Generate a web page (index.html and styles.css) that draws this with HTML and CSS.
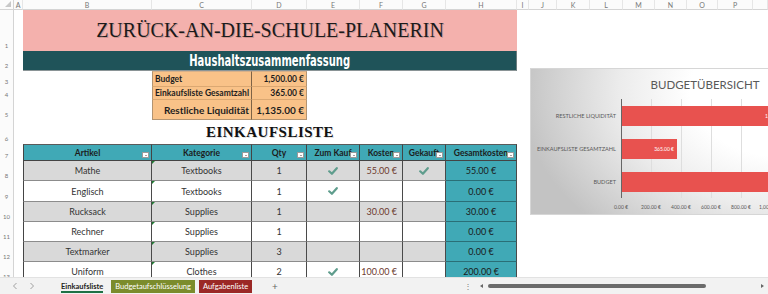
FILE: index.html
```html
<!DOCTYPE html>
<html lang="de">
<head>
  <meta charset="UTF-8">
  <title>Zurück-an-die-Schule-Planerin</title>
  <meta name="viewport" content="width=device-width, initial-scale=1.0">
  <link rel="stylesheet" href="styles.css">
</head>
<body>

<div class="sheet">

  <div class="row row-head">
    <div class="corner"></div>
    <div class="col">A</div>
    <div class="col">B</div>
    <div class="col">C</div>
    <div class="col">D</div>
    <div class="col">E</div>
    <div class="col">F</div>
    <div class="col">G</div>
    <div class="col">H</div>
    <div class="col">I</div>
    <div class="col">J</div>
    <div class="col">K</div>
    <div class="col">L</div>
    <div class="col">M</div>
    <div class="col">N</div>
    <div class="col">O</div>
    <div class="col">P</div>
    <div class="col"></div>
  </div>

  <div class="row r1">
    <div class="num">1</div>
    <div class="title">Zurück-an-die-Schule-Planerin</div>
  </div>

  <div class="row r2">
    <div class="num">2</div>
    <div class="subtitle"><span>Haushaltszusammenfassung</span></div>
  </div>

  <div class="row r3">
    <div class="num">3</div>
    <div class="sum-label left top">Budget</div>
    <div class="sum-value top">1,500.00 €</div>
  </div>

  <div class="row r4">
    <div class="num">4</div>
    <div class="sum-label">Einkaufsliste Gesamtzahl</div>
    <div class="sum-value">365.00 €</div>
  </div>

  <div class="row r5">
    <div class="num">5</div>
    <div class="sum-label big bottom">Restliche Liquidität</div>
    <div class="sum-value big bottom">1,135.00 €</div>
  </div>

  <div class="row r6">
    <div class="num">6</div>
    <div class="heading">Einkaufsliste</div>
  </div>

  <div class="row r7">
    <div class="num">7</div>
    <div class="th first">Artikel<span class="filter"></span></div>
    <div class="th">Kategorie<span class="filter"></span></div>
    <div class="th">Qty<span class="filter"></span></div>
    <div class="th">Zum Kauf<span class="filter"></span></div>
    <div class="th">Kosten<span class="filter"></span></div>
    <div class="th">Gekauft<span class="filter"></span></div>
    <div class="th">Gesamtkosten<span class="filter"></span></div>
  </div>

  <div class="row r-data gray">
    <div class="num">8</div>
    <div class="td first">Mathe</div>
    <div class="td cat">Textbooks</div>
    <div class="td">1</div>
    <div class="td"><svg class="check" viewBox="0 0 10 8"><path d="M1.2 4.3 3.9 6.8 8.8 1.2"/></svg></div>
    <div class="td cost">55.00 €</div>
    <div class="td"><svg class="check" viewBox="0 0 10 8"><path d="M1.2 4.3 3.9 6.8 8.8 1.2"/></svg></div>
    <div class="td total">55.00 €</div>
  </div>

  <div class="row r-data r9">
    <div class="num">9</div>
    <div class="td first">Englisch</div>
    <div class="td cat">Textbooks</div>
    <div class="td">1</div>
    <div class="td"><svg class="check" viewBox="0 0 10 8"><path d="M1.2 4.3 3.9 6.8 8.8 1.2"/></svg></div>
    <div class="td cost"></div>
    <div class="td"></div>
    <div class="td total">0.00 €</div>
  </div>

  <div class="row r-data gray">
    <div class="num">10</div>
    <div class="td first">Rucksack</div>
    <div class="td cat">Supplies</div>
    <div class="td">1</div>
    <div class="td"></div>
    <div class="td cost">30.00 €</div>
    <div class="td"></div>
    <div class="td total">30.00 €</div>
  </div>

  <div class="row r-data">
    <div class="num">11</div>
    <div class="td first">Rechner</div>
    <div class="td cat">Supplies</div>
    <div class="td">1</div>
    <div class="td"></div>
    <div class="td cost"></div>
    <div class="td"></div>
    <div class="td total">0.00 €</div>
  </div>

  <div class="row r-data gray">
    <div class="num">12</div>
    <div class="td first">Textmarker</div>
    <div class="td cat">Supplies</div>
    <div class="td">3</div>
    <div class="td"></div>
    <div class="td cost"></div>
    <div class="td"></div>
    <div class="td total">0.00 €</div>
  </div>

  <div class="row r-data">
    <div class="num">13</div>
    <div class="td first">Uniform</div>
    <div class="td cat">Clothes</div>
    <div class="td">2</div>
    <div class="td"><svg class="check" viewBox="0 0 10 8"><path d="M1.2 4.3 3.9 6.8 8.8 1.2"/></svg></div>
    <div class="td cost">100.00 €</div>
    <div class="td"></div>
    <div class="td total">200.00 €</div>
  </div>

  <!-- floating chart object -->
  <div class="chart">
    <div class="chart-title">Budgetübersicht</div>
    <div class="chart-labels">
      <div>Restliche Liquidität</div>
      <div>Einkaufsliste Gesamtzahl</div>
      <div>Budget</div>
    </div>
    <div class="plot">
      <div class="bar" style="width:170px"><span>1,135.00 €</span></div>
      <div class="bar" style="width:55px"><span>365.00 €</span></div>
      <div class="bar" style="width:225px"><span>1,500.00 €</span></div>
    </div>
    <div></div>
    <div class="ticks">
      <span>0.00 €</span>
      <span>200.00 €</span>
      <span>400.00 €</span>
      <span>600.00 €</span>
      <span>800.00 €</span>
      <span>1,000.00 €</span>
      <span>1,200.00 €</span>
      <span>1,400.00 €</span>
      <span>1,600.00 €</span>
    </div>
  </div>

</div>

<div class="tabbar">
  <span class="nav first-nav"><svg viewBox="0 0 6 8"><path d="M4.5 1 1.5 4 4.5 7"/></svg></span>
  <span class="nav"><svg viewBox="0 0 6 8"><path d="M1.5 1 4.5 4 1.5 7"/></svg></span>
  <span class="tab active">Einkaufsliste</span>
  <span class="tab olive">Budgetaufschlüsselung</span>
  <span class="tab red">Aufgabenliste</span>
  <span class="add">+</span>
  <div class="hscroll">
    <span class="dots">&#8942;</span>
    <span class="arrow-left"></span>
    <span class="thumb"></span>
    <span class="arrow-right"></span>
  </div>
</div>

</body>
</html>
```

FILE: styles.css
```css
* { box-sizing: border-box; }
body { margin: 0; font-family: Lato, "Open Sans", sans-serif; color: #222; background: #fff; }

.sheet { position: relative; height: 277px; overflow: hidden; }
.row {
  display: grid;
  grid-template-columns: 14px 9px 129px 100px 55px 53px 43px 43px 71px 12px 28px 33px 33px 32px 32px 31px 35px 1fr;
}
.row-head { height: 10px; }
.r1 { height: 41px; }
.r2 { height: 20px; }
.r3 { height: 16px; }
.r4 { height: 13px; }
.r5 { height: 20px; }
.r6 { height: 24px; }
.r7 { height: 17px; }
.r-data { height: 20px; }
.r-data.r9 { height: 21px; }

/* headers */
.corner { position: relative; background: #fbfbfb; border-right: 1px solid #d4d4d4; border-bottom: 1px solid #d4d4d4; }
.corner::after { content: ""; position: absolute; right: 2px; bottom: 2px; border-left: 6px solid transparent; border-bottom: 6px solid #c8c8c8; }
.col {
  display: flex; align-items: center; justify-content: center;
  font-size: 7px; color: #777; background: #fbfbfb;
  border-right: 1px solid #e6e6e6; border-bottom: 1px solid #d4d4d4;
}
.num {
  grid-column: 1;
  display: flex; align-items: flex-end; justify-content: center;
  padding-bottom: 2px; font-size: 6px; line-height: 7px; color: #777;
  background: #fbfbfb; border-right: 1px solid #d4d4d4;
}

/* title block */
.title {
  grid-column: 3 / 10;
  display: flex; align-items: center; justify-content: center;
  background: #f4b1ad;
  font-family: "Liberation Serif", serif; font-size: 20px;
  text-transform: uppercase; color: #1b1b1b;
  text-shadow: 1px 1px 0 rgba(0, 0, 0, .18);
}
.subtitle {
  grid-column: 3 / 10;
  display: flex; align-items: center; justify-content: center;
  background: #1f5359; color: #fff;
  border-right: 1px solid #6c7c7e; border-bottom: 1px solid #8a9496;
}
.subtitle span {
  display: inline-block; transform: scaleX(.74);
  font-family: "DejaVu Sans Condensed", "Liberation Sans", sans-serif;
  font-weight: bold; font-size: 15px; white-space: nowrap;
}

/* summary box */
.sum-label, .sum-value {
  display: flex; align-items: center; justify-content: flex-end;
  background: #f9c288; font-weight: bold; font-size: 8.5px; color: #1e1e1e;
  padding: 0 2px; border-bottom: 1px solid #dba872; white-space: nowrap;
}
.sum-label { grid-column: 4; border-left: 1px solid #b39471; border-right: 1px solid #7e6346; }
.sum-label.left { justify-content: flex-start; }
.sum-value { border-right: 1px solid #b39471; }
.top { border-top: 1px solid #d6b08a; }
.bottom { border-bottom: 1px solid #b39471; }
.big { font-size: 10px; }

.heading {
  grid-column: 3 / 10;
  display: flex; align-items: center; justify-content: center;
  font-family: "Liberation Serif", serif; font-weight: bold; font-size: 15px;
  letter-spacing: .5px; text-transform: uppercase; color: #111;
  text-shadow: 1px 1px 0 rgba(0, 0, 0, .15);
}

/* shopping table */
.th {
  position: relative; overflow: hidden; white-space: nowrap;
  display: flex; align-items: center; justify-content: center;
  background: #40a9b6; font-weight: bold; font-size: 8.5px; color: #1c1c1c;
  border-top: 1px solid #5a5a5a; border-right: 1px solid #444; border-bottom: 1px solid #444;
}
.th.first, .td.first { grid-column: 3; border-left: 1px solid #444; }
.filter {
  position: absolute; right: 2px; bottom: 2px; width: 7px; height: 6px;
  background: #fff; border: 1px solid #9a9a9a;
}
.filter::after {
  content: ""; position: absolute; left: 1.5px; top: 1.5px;
  border-left: 1.5px solid transparent; border-right: 1.5px solid transparent; border-top: 1.5px solid #444;
}

.td {
  position: relative;
  display: flex; align-items: center; justify-content: center;
  font-size: 9px; color: #333; background: #fff;
  border-right: 1px solid #4a4a4a; border-bottom: 1px solid #8c8c8c;
}
.gray .td { background: #d9d9d9; }
.td.cost { justify-content: flex-end; padding-right: 5px; color: #6d3a2f; }
.gray .td.total, .td.total { background: #40a9b6; color: #1a1a1a; border-bottom: 1px solid #2a6f77; }
.td.cat::before {
  content: ""; position: absolute; left: 0; top: 0;
  border-top: 3px solid #1f7a33; border-right: 3px solid transparent;
}
.check { width: 10px; height: 8px; fill: none; stroke: #5f9d8d; stroke-width: 2.2; stroke-linecap: round; stroke-linejoin: round; }

/* chart */
.chart {
  position: absolute; left: 530px; top: 68px; width: 350px; height: 147px;
  display: grid; grid-template-columns: 90px 1fr; grid-template-rows: 30px 99px 18px;
  background: radial-gradient(ellipse 75% 130% at 72% 15%, #fff 35%, #ececec 62%, #c3c3c3 100%);
  border: 1px solid #d6d6d6;
}
.chart-title {
  grid-column: 1 / 3;
  display: flex; align-items: center; justify-content: center;
  font-size: 11.5px; color: #595959; text-transform: uppercase;
}
.chart-labels { display: flex; flex-direction: column; justify-content: space-around; }
.chart-labels div { text-align: right; padding-right: 5px; font-size: 5.6px; color: #595959; text-transform: uppercase; white-space: nowrap; }
.plot {
  display: flex; flex-direction: column; justify-content: space-around;
  border-left: 1px solid #666;
  background: repeating-linear-gradient(to right, transparent 0 29px, #dedede 29px 30px);
}
.bar {
  height: 20px; background: #e8524f;
  display: flex; align-items: center; justify-content: flex-end;
}
.bar span { padding-right: 3px; font-size: 5px; color: #fff; white-space: nowrap; }
.ticks { display: flex; align-items: center; margin-left: -15px; }
.ticks span { flex: none; width: 30px; text-align: center; font-size: 5px; color: #595959; white-space: nowrap; }

/* sheet tabs */
.tabbar {
  display: flex; align-items: center; height: 17px;
  background: #f2f2f2; border-top: 1px solid #e2e2e2;
  font-size: 7.5px;
}
.nav { width: 17px; height: 8px; display: flex; justify-content: center; }
.nav svg { width: 6px; height: 8px; fill: none; stroke: #a0a0a0; stroke-width: 1; }
.first-nav { margin-left: 6px; }
.tab { height: 13px; display: flex; align-items: center; padding: 0 4px; white-space: nowrap; }
.tab.active { margin-left: 17px; color: #222; font-weight: bold; position: relative; }
.tab.active::after { content: ""; position: absolute; left: 4px; right: 4px; bottom: 0; height: 1.5px; background: #1e7145; }
.tab.olive { margin-left: 4px; background: #7b8c2c; color: #fff; }
.tab.red { margin-left: 4px; background: #9b2826; color: #fff; }
.add { margin-left: 20px; color: #666; font-size: 10px; }
.hscroll { margin-left: auto; width: 306px; display: flex; align-items: center; }
.dots { width: 10px; margin-left: 1px; color: #777; font-size: 8px; text-align: center; }
.arrow-left { margin-left: 7px; border-top: 2px solid transparent; border-bottom: 2px solid transparent; border-right: 3px solid #666; }
.thumb { margin-left: 5px; width: 218px; height: 4px; border-radius: 2px; background: #6b6b6b; }
.arrow-right { margin-left: auto; margin-right: 4px; border-top: 2px solid transparent; border-bottom: 2px solid transparent; border-left: 3px solid #666; }
```
